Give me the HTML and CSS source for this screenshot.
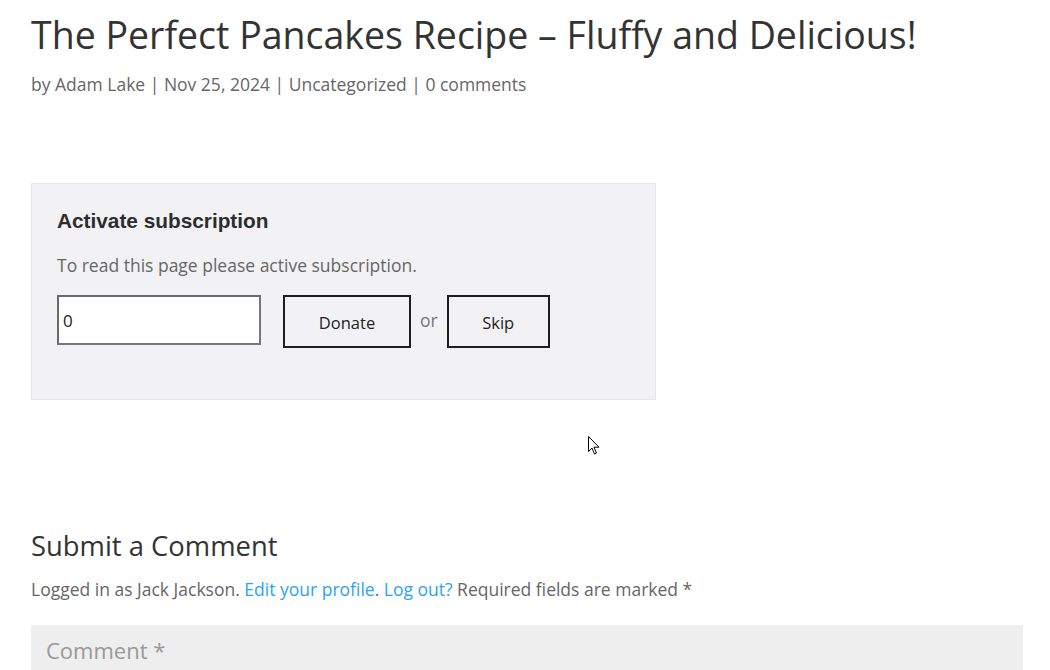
FILE: index.html
```html
<!DOCTYPE html>
<html>
<head>
<meta charset="utf-8">
<link rel="stylesheet" href="styles.css">
</head>
<body>
<div class="page">
  <h1 class="title">The Perfect Pancakes Recipe – Fluffy and Delicious!</h1>
  <p class="meta">by <a href="#">Adam Lake</a> | <span>Nov 25, 2024</span> | <a href="#">Uncategorized</a> | <span>0 comments</span></p>

  <div class="sub-box">
    <h3 class="sub-title">Activate subscription</h3>
    <p class="sub-text">To read this page please active subscription.</p>
    <div class="sub-row">
      <input class="sub-input" type="text" value="0">
      <button class="btn btn-donate">Donate</button>
      <span class="or">or</span>
      <button class="btn btn-skip">Skip</button>
    </div>
  </div>

  <h3 class="comment-title">Submit a Comment</h3>
  <p class="logged">Logged in as Jack Jackson. <a href="#">Edit your profile</a>. <a href="#">Log out?</a> Required fields are marked *</p>
  <div class="comment-box">Comment *</div>
</div>
<svg class="cursor" width="12" height="20" viewBox="0 0 12 20"><path d="M0.5 0.5 L0.5 15.5 L4 12 L6.5 18 L8.5 17 L6 11.2 L11 11.2 Z" fill="#fff" stroke="#000" stroke-width="1"/></svg>
</body>
</html>
```
FILE: styles.css
```css
html, body {
  margin: 0;
  padding: 0;
  background: #fff;
}
body {
  font-family: "Open Sans", Arial, sans-serif;
  color: #666;
  overflow: hidden;
  height: 670px;
  position: relative;
}
.page {
  padding: 0 27px 0 31px;
}
a {
  color: inherit;
  text-decoration: none;
}
.title {
  margin: 0;
  padding-top: 12px;
  font-weight: 400;
  font-size: 37.5px;
  line-height: 46px;
  color: #333;
}
.meta {
  margin: 14px 0 0;
  font-size: 17.5px;
  line-height: 24px;
  color: #666;
}
.sub-box {
  margin-top: 87px;
  width: 574px;
  height: 167px;
  background: #f2f2f5;
  border: 1px solid #e6e6e9;
  padding: 24px 24px 24px 25px;
}
.sub-title {
  margin: 0;
  font-family: "Liberation Sans", Arial, sans-serif;
  font-weight: 700;
  font-size: 20.8px;
  line-height: 26px;
  color: #2d2d2d;
}
.sub-text {
  margin: 19px 0 0;
  font-size: 17.5px;
  line-height: 24px;
  color: #666;
}
.sub-row {
  display: flex;
  align-items: flex-start;
  margin-top: 18px;
}
.sub-input {
  box-sizing: border-box;
  width: 204px;
  height: 50px;
  margin: 0;
  padding: 0 4px;
  border: 2px solid #6a6a6a;
  border-right-color: #777;
  border-bottom-color: #777;
  background: #fff;
  font-family: "Open Sans", Arial, sans-serif;
  font-size: 17px;
  color: #222;
  outline: none;
}
.btn {
  box-sizing: border-box;
  height: 53px;
  margin: 0;
  border: 2px solid #1e1e1e;
  background: #f2f2f5;
  font-family: "Open Sans", Arial, sans-serif;
  font-size: 16.5px;
  color: #222;
  padding: 1px 0 0;
}
.btn-donate {
  width: 128px;
  margin-left: 22px;
}
.or {
  margin: 13px 9px 0 9px;
  font-size: 17.5px;
  line-height: 24px;
  color: #777;
}
.btn-skip {
  width: 103px;
}
.comment-title {
  margin: 128px 0 0;
  font-weight: 400;
  font-size: 27.4px;
  line-height: 36px;
  color: #333;
}
.logged {
  margin: 12px 0 0;
  font-size: 17.5px;
  line-height: 26px;
  color: #666;
}
.logged a {
  color: #2ea3f2;
}
.comment-box {
  margin-top: 23px;
  height: 60px;
  background: #eee;
  padding: 10px 15px;
  font-size: 22px;
  line-height: 30px;
  color: #999;
}
.cursor {
  position: absolute;
  left: 588px;
  top: 436px;
}
```
